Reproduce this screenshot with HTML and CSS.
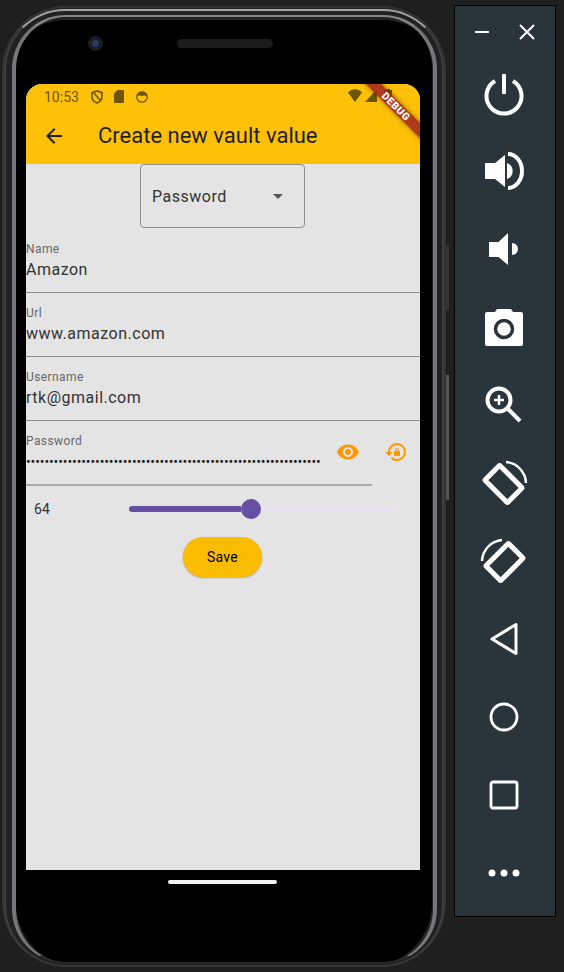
FILE: index.html
```html
<!DOCTYPE html>
<html lang="en">
<head>
    <meta charset="UTF-8">
    <meta name="viewport" content="width=device-width, initial-scale=1.0">
    <title>Create new vault value</title>
    <link rel="stylesheet" href="styles.css">
</head>
<body>
    <div class="phone">
        <div class="phone-top">
            <span class="camera"></span>
            <span class="speaker"></span>
        </div>
        <div class="screen">
            <div class="appbar">
                <div class="status">
                    <span class="clock">10:53</span>
                    <svg class="st-icon shield" viewBox="0 0 12 14"><path d="M6 1 1 2.6v4C1 9.8 3.2 12 6 13c2.8-1 5-3.2 5-6.400v-4z" fill="none" stroke="currentColor" stroke-width="1.700"/><path d="M3 3l6 7" stroke="currentColor" stroke-width="1.500"/></svg>
                    <svg class="st-icon sd" viewBox="0 0 10 13"><path d="M3.500 0H9a1 1 0 0 1 1 1v11a1 1 0 0 1-1 1H1a1 1 0 0 1-1-1V3.500z" fill="currentColor"/></svg>
                    <svg class="st-icon face" viewBox="0 0 12 12"><circle cx="6" cy="6" r="5.200" fill="none" stroke="currentColor" stroke-width="1.300"/><path d="M1 5.500a5 5 0 0 1 10 0C9 4.500 8 4 6 5 4 4 3 4.500 1 5.500z" fill="currentColor"/></svg>
                    <span class="status-right">
                        <svg class="st-icon wifi" viewBox="0 0 14 13"><path d="M0 3.500C4-.8 10-.8 14 3.500L7 13z" fill="currentColor"/></svg>
                        <svg class="st-icon signal" viewBox="0 0 12 13"><path d="M12 0v13H0z" fill="currentColor"/></svg>
                        <svg class="st-icon battery" viewBox="0 0 8 13"><path d="M2 1V0h4v1h2v12H0V1z" fill="currentColor"/></svg>
                    </span>
                </div>
                <div class="toolbar-row">
                    <svg class="back" viewBox="0 0 24 24"><path d="M20 11H7.830l5.590-5.590L12 4l-8 8 8 8 1.410-1.410L7.830 13H20v-2z"/></svg>
                    <h1>Create new vault value</h1>
                </div>
            </div>

            <div class="dropdown">
                <span>Password</span>
                <span class="caret"></span>
            </div>

            <div class="field">
                <label>Name</label>
                <div class="value">Amazon</div>
            </div>
            <div class="field">
                <label>Url</label>
                <div class="value">www.amazon.com</div>
            </div>
            <div class="field">
                <label>Username</label>
                <div class="value">rtk@gmail.com</div>
            </div>

            <div class="password-row">
                <div class="field password-field">
                    <div class="password-text">
                        <label>Password</label>
                        <div class="value dots">••••••••••••••••••••••••••••••••••••••••••••••••••••••••••••••••</div>
                    </div>
                    <svg class="orange-icon eye" viewBox="0 0 24 24"><path d="M12 4.500C7 4.500 2.730 7.610 1 12c1.730 4.390 6 7.500 11 7.500s9.270-3.110 11-7.500c-1.730-4.390-6-7.500-11-7.500zM12 17c-2.760 0-5-2.240-5-5s2.240-5 5-5 5 2.240 5 5-2.240 5-5 5zm0-8c-1.660 0-3 1.340-3 3s1.340 3 3 3 3-1.340 3-3-1.340-3-3-3z"/></svg>
                </div>
                <svg class="orange-icon reset" viewBox="0 0 24 24"><path d="M13 3c-4.970 0-9 4.030-9 9H1l4 3.990L9 12H6c0-3.870 3.130-7 7-7s7 3.130 7 7-3.130 7-7 7c-1.900 0-3.620-.76-4.880-1.990L6.700 18.420C8.320 20.010 10.550 21 13 21c4.970 0 9-4.030 9-9s-4.030-9-9-9zm2 8v-1c0-1.100-.9-2-2-2s-2 .9-2 2v1c-.55 0-1 .45-1 1v3c0 .55.45 1 1 1h4c.55 0 1-.45 1-1v-3c0-.55-.45-1-1-1zm-1 0h-2v-1c0-.55.45-1 1-1s1 .45 1 1v1z"/></svg>
            </div>

            <div class="slider-row">
                <span class="slider-value">64</span>
                <div class="slider">
                    <span class="track-on"></span>
                    <span class="thumb"></span>
                    <span class="track-off"></span>
                </div>
            </div>

            <button class="save">Save</button>

            <div class="debug-banner">DEBUG</div>
        </div>
        <div class="home-bar"></div>
    </div>

    <div class="side-buttons">
        <span class="side-btn top"></span>
        <span class="side-btn bottom"></span>
    </div>

    <div class="toolbar">
        <div class="tool-top">
            <svg class="tool-small" viewBox="0 0 16 16"><path d="M1 8h14" stroke-width="2"/></svg>
            <svg class="tool-small" viewBox="0 0 16 16"><path d="M1 1l14 14M15 1 1 15" stroke-width="2"/></svg>
        </div>
        <div class="tool"><svg viewBox="0 0 44 44"><path d="M13 10A17.500 17.500 0 1 0 31 10" stroke-width="4"/><path d="M22 3v20" stroke-width="4"/></svg></div>
        <div class="tool"><svg viewBox="0 0 44 44"><path class="fill" d="M3 14h10L23 6v32L13 30H3z"/><path class="fill" d="M25 14a8.500 8.500 0 0 1 0 16z"/><path d="M26 5a14 17 0 0 1 0 34" stroke-width="4"/></svg></div>
        <div class="tool"><svg viewBox="0 0 44 44"><path class="fill" d="M7 15h9.500L26 6v32l-9.500-8H7z"/><path class="fill" d="M30 16a6 6 0 0 1 0 12z"/></svg></div>
        <div class="tool"><svg viewBox="0 0 44 44"><path class="fill" d="M3 9a2 2 0 0 1 2-2h8l2-3h14l2 3h8a2 2 0 0 1 2 2v30a2 2 0 0 1-2 2H5a2 2 0 0 1-2-2z"/><circle cx="22" cy="24" r="8.500" fill="none" stroke="#29343b" stroke-width="3.500"/></svg></div>
        <div class="tool"><svg viewBox="0 0 44 44"><circle cx="17" cy="17" r="11.500" stroke-width="4"/><path d="M17 12v10M12 17h10" stroke-width="2.500"/><path d="M26 26l12 12" stroke-width="4"/></svg></div>
        <div class="tool"><svg viewBox="0 0 44 44"><rect x="11" y="7" width="21" height="32" rx="1" transform="rotate(-45 21.500 23)" stroke-width="5"/><path d="M24 1A22 22 0 0 1 44 22" stroke-width="2.500"/></svg></div>
        <div class="tool"><svg class="mirror" viewBox="0 0 44 44"><rect x="11" y="7" width="21" height="32" rx="1" transform="rotate(-45 21.500 23)" stroke-width="5"/><path d="M24 1A22 22 0 0 1 44 22" stroke-width="2.500"/></svg></div>
        <div class="tool"><svg viewBox="0 0 44 44"><path d="M34 7.500 10 22l24 14.500z" stroke-width="3" stroke-linejoin="round"/></svg></div>
        <div class="tool"><svg viewBox="0 0 44 44"><circle cx="22" cy="22" r="13" stroke-width="2.800"/></svg></div>
        <div class="tool"><svg viewBox="0 0 44 44"><rect x="9" y="9" width="26" height="26" rx="2" stroke-width="2.800"/></svg></div>
        <div class="tool"><svg viewBox="0 0 44 44"><circle class="fill" cx="10" cy="22" r="3.500"/><circle class="fill" cx="22" cy="22" r="3.500"/><circle class="fill" cx="34" cy="22" r="3.500"/></svg></div>
    </div>
</body>
</html>
```

FILE: styles.css
```css
:root {
    --bg: #1f1f1f;
    --amber: #ffc107;
    --screen: #e4e4e4;
    --ink: #212121;
    --muted: #666;
    --rule: #8e8e8e;
    --orange: #ff9800;
    --purple: #6750a4;
    --tool-bg: #29343b;
}
* {
    box-sizing: border-box;
}
html, body {
    height: 100%;
}
body {
    margin: 0;
    background-color: var(--bg);
    font-family: Roboto, "Liberation Sans", sans-serif;
    color: var(--ink);
    display: flex;
    align-items: flex-start;
    padding: 5px 0 0 2px;
    overflow: hidden;
}

/* device frame */
.phone {
    position: relative;
    width: 444px;
    height: 961px;
    margin-top: 1px;
    flex-shrink: 0;
    background: #000;
    border-radius: 64px;
    padding: 0 24px;
    box-shadow:
        inset 0 0 0 2px #333,
        inset 0 0 0 5px #222,
        inset 0 14px 0 #222,
        inset 14px 0 0 #222,
        inset -14px 0 0 #222;
}
.phone::before,
.phone::after {
    content: "";
    position: absolute;
    border-style: solid;
    pointer-events: none;
}
.phone::before {
    inset: 3px 2px 1px;
    border-width: 2px 2px 1px;
    border-color: #a4a4a8 #3e3e3e #3a3a3a;
    border-radius: 61px;
}
.phone::after {
    inset: 9px 9px 4px 10px;
    border-width: 2px 4px 1px;
    border-color: #85858a #77777b #2e2e2e;
    border-radius: 54px;
}
.phone-top {
    height: 78px;
    display: flex;
    align-items: flex-start;
    padding: 27px 0 0 62px;
}
.camera {
    width: 15px;
    height: 15px;
    margin-top: 3px;
    border-radius: 50%;
    background: radial-gradient(circle, #2a3a66 0 3px, #1a1c22 4px 7px);
}
.speaker {
    width: 96px;
    height: 9px;
    margin: 6px 0 0 74px;
    border-radius: 5px;
    background: #1c1c1c;
}
.screen {
    position: relative;
    width: 394px;
    height: 786px;
    background: var(--screen);
    border-radius: 16px 16px 0 0;
    overflow: hidden;
}
.home-bar {
    width: 109px;
    height: 4px;
    margin: 10px 0 0 142px;
    background: #f2f2f2;
    border-radius: 2px;
}
.side-buttons {
    width: 0;
    display: flex;
    flex-direction: column;
    flex-shrink: 0;
}
.side-btn {
    width: 3px;
    background: #333;
}
.side-btn.top {
    height: 65px;
    margin-top: 240px;
}
.side-btn.bottom {
    height: 125px;
    margin-top: 65px;
    background: #555;
}

/* app bar */
.appbar {
    height: 80px;
    background: var(--amber);
}
.status {
    height: 24px;
    display: flex;
    align-items: center;
    padding: 1px 0 0 18px;
    color: #6e5600;
}
.clock {
    font-size: 14px;
    width: 47px;
}
.st-icon {
    display: block;
    flex-shrink: 0;
}
.shield {
    width: 12px;
    height: 14px;
}
.sd {
    width: 10px;
    height: 13px;
    margin-left: 11px;
}
.face {
    width: 12px;
    height: 12px;
    margin-left: 12px;
}
.status-right {
    display: flex;
    margin-left: auto;
    padding-right: 28px;
    margin-top: -3px;
}
.wifi {
    width: 14px;
    height: 13px;
}
.signal {
    width: 12px;
    height: 13px;
    margin-left: 3px;
}
.battery {
    width: 8px;
    height: 13px;
    margin-left: 7px;
}
.toolbar-row {
    height: 55px;
    display: flex;
    align-items: center;
    padding-left: 16px;
}
.back {
    width: 24px;
    height: 24px;
    fill: var(--ink);
}
h1 {
    margin: 0 0 0 32px;
    font-size: 22px;
    font-weight: 400;
}

/* form */
.dropdown {
    width: 165px;
    height: 64px;
    margin: 0 0 1px 114px;
    padding: 0 21px 0 11px;
    display: flex;
    align-items: center;
    justify-content: space-between;
    border: 1px solid var(--rule);
    border-radius: 4px;
    font-size: 16px;
    letter-spacing: 0.5px;
    color: #333;
}
.caret {
    width: 0;
    height: 0;
    border-left: 5px solid transparent;
    border-right: 5px solid transparent;
    border-top: 5px solid #555;
}
.field {
    height: 64px;
    padding-top: 13px;
    border-bottom: 1px solid var(--rule);
}
.field label {
    display: block;
    font-size: 12px;
    line-height: 14px;
    letter-spacing: 0.4px;
    color: var(--muted);
}
.value {
    font-size: 16px;
    line-height: 24px;
    letter-spacing: 0.5px;
    margin-top: 2px;
    color: #333;
}
.password-row {
    display: flex;
    align-items: flex-start;
}
.password-field {
    width: 346px;
    height: 65px;
    display: flex;
    align-items: flex-start;
    justify-content: space-between;
    padding-right: 12px;
    border-bottom-color: #ababab;
    border-bottom-width: 2px;
}
.password-text {
    width: 297px;
}
.dots {
    white-space: nowrap;
    font-size: 14px;
    letter-spacing: -0.12px;
    color: #222;
}
.orange-icon {
    width: 24px;
    height: 24px;
    fill: var(--orange);
    flex-shrink: 0;
    display: block;
}
.eye {
    margin-top: 6px;
}
.reset {
    margin: 19px 0 0 12px;
}

/* slider */
.slider-row {
    display: flex;
    align-items: center;
    height: 47px;
    padding: 0 0 1px 8px;
}
.slider-value {
    width: 95px;
    font-size: 14px;
    letter-spacing: 0.25px;
    color: #333;
}
.slider {
    width: 266px;
    display: flex;
    align-items: center;
}
.track-on {
    width: 112px;
    height: 6px;
    background: var(--purple);
    border-radius: 3px 0 0 3px;
}
.thumb {
    width: 20px;
    height: 20px;
    background: var(--purple);
    border-radius: 50%;
    flex-shrink: 0;
}
.track-off {
    flex: 1;
    height: 4px;
    background: #e9e0f1;
    border-radius: 0 2px 2px 0;
}
.save {
    display: block;
    width: 79px;
    height: 40px;
    margin: 4px 0 0 157px;
    padding: 0;
    border: none;
    border-radius: 20px;
    background: #f9bc00;
    color: #000;
    font-family: inherit;
    font-size: 14px;
    font-weight: 400;
    letter-spacing: 0.3px;
    box-shadow: 0 1px 2px rgba(0, 0, 0, 0.25);
}

/* flutter debug ribbon */
.debug-banner {
    position: absolute;
    top: 17px;
    right: -36px;
    width: 120px;
    height: 11px;
    line-height: 11px;
    text-align: center;
    font-size: 10.2px;
    font-weight: 900;
    letter-spacing: 0.6px;
    color: #fff;
    background: rgba(165, 45, 30, 0.9);
    box-shadow: 0 0 5px rgba(0, 0, 0, 0.45);
    transform: rotate(45deg);
}

/* emulator toolbar */
.toolbar {
    width: 102px;
    height: 912px;
    margin-left: 8px;
    flex-shrink: 0;
    background: var(--tool-bg);
    border: 1px solid #000;
}
.tool-top {
    height: 48px;
    padding: 4px 20px 0 19px;
    display: flex;
    align-items: center;
    justify-content: space-between;
}
.tool-small {
    width: 16px;
    height: 16px;
    fill: none;
    stroke: #fff;
}
.tool {
    height: 78px;
    padding-right: 2px;
    display: flex;
    align-items: center;
    justify-content: center;
}
.tool svg {
    width: 44px;
    height: 44px;
    fill: none;
    stroke: #fff;
    overflow: visible;
}
.tool svg .fill {
    fill: #fff;
    stroke: none;
}
.mirror {
    transform: scaleX(-1);
}
```
